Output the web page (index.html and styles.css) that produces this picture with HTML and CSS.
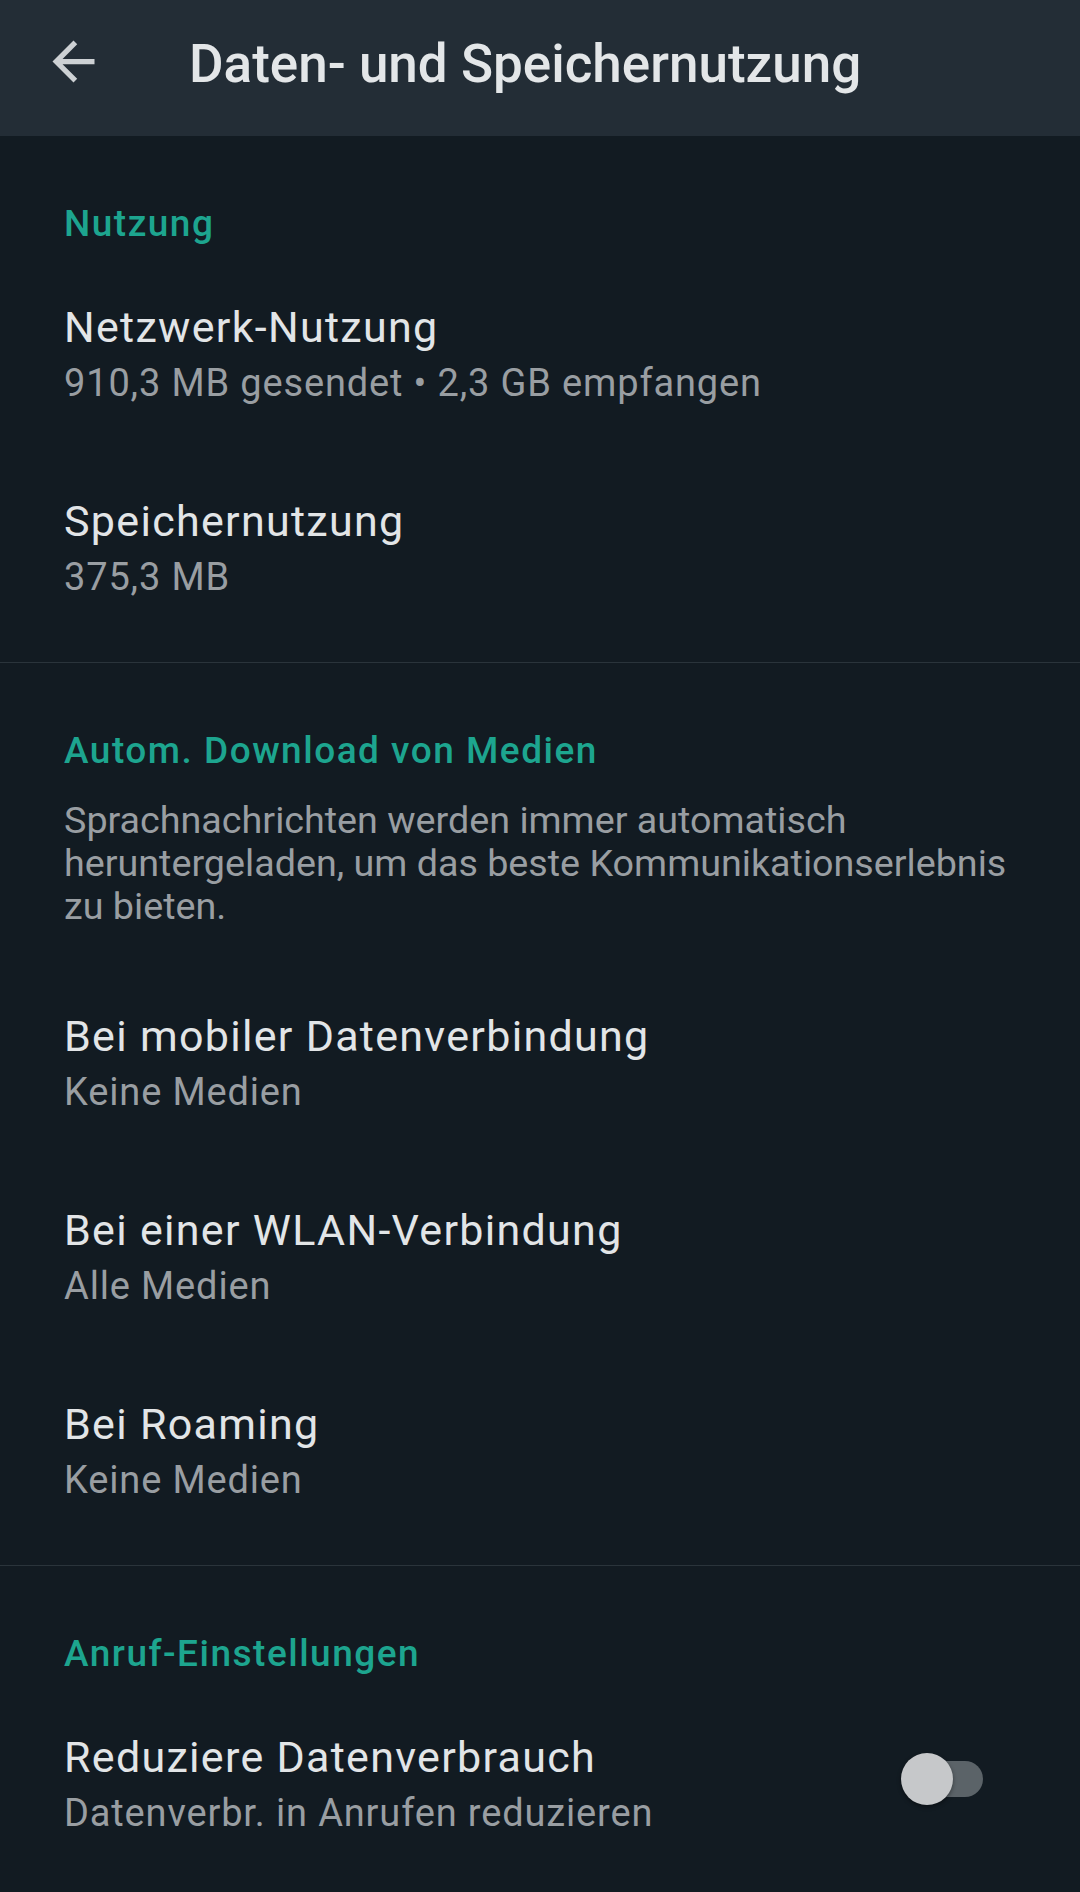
FILE: index.html
```html
<!DOCTYPE html>
<html lang="de">
<head>
    <meta charset="UTF-8">
    <meta name="viewport" content="width=device-width, initial-scale=1.0">
    <title>Daten- und Speichernutzung</title>
    <link rel="stylesheet" href="styles.css">
</head>
<body>
    <!-- Top bar -->
    <header class="toolbar">
        <svg class="back" viewBox="0 0 24 24" aria-hidden="true">
            <path d="M20 11H7.83l5.59-5.59L12 4l-8 8 8 8 1.41-1.41L7.83 13H20v-2z"/>
        </svg>
        <h1>Daten- und Speichernutzung</h1>
    </header>

    <!-- Usage -->
    <section class="group">
        <h2>Nutzung</h2>
        <div class="item">
            <div class="text">
                <div class="title">Netzwerk-Nutzung</div>
                <div class="sub">910,3 MB gesendet • 2,3 GB empfangen</div>
            </div>
        </div>
        <div class="item">
            <div class="text">
                <div class="title">Speichernutzung</div>
                <div class="sub">375,3 MB</div>
            </div>
        </div>
    </section>

    <!-- Auto download -->
    <section class="group">
        <h2>Autom. Download von Medien</h2>
        <p class="note">Sprachnachrichten werden immer automatisch heruntergeladen, um das beste Kommunikationserlebnis zu bieten.</p>
        <div class="item">
            <div class="text">
                <div class="title">Bei mobiler Datenverbindung</div>
                <div class="sub">Keine Medien</div>
            </div>
        </div>
        <div class="item">
            <div class="text">
                <div class="title">Bei einer WLAN-Verbindung</div>
                <div class="sub">Alle Medien</div>
            </div>
        </div>
        <div class="item">
            <div class="text">
                <div class="title">Bei Roaming</div>
                <div class="sub">Keine Medien</div>
            </div>
        </div>
    </section>

    <!-- Calls -->
    <section class="group last">
        <h2>Anruf-Einstellungen</h2>
        <div class="item">
            <div class="text">
                <div class="title">Reduziere Datenverbrauch</div>
                <div class="sub">Datenverbr. in Anrufen reduzieren</div>
            </div>
            <div class="switch">
                <span class="track"></span>
                <span class="thumb"></span>
            </div>
        </div>
    </section>
</body>
</html>
```

FILE: styles.css
```css
/* Dark settings screen */
body {
    margin: 0;
    padding: 0;
    background-color: #121b22;
    font-family: Roboto, "Noto Sans", sans-serif;
    color: #e2e5e7;
    min-height: 100vh;
}
.toolbar {
    height: 136px;
    background-color: #232d36;
    display: flex;
    align-items: flex-start;
    padding: 30px 0 0 42px;
    box-sizing: border-box;
}
.back {
    width: 63px;
    height: 63px;
    fill: #cdd1d4;
    flex-shrink: 0;
}
.toolbar h1 {
    margin: 3px 0 0 84px;
    font-size: 53px;
    line-height: 63px;
    font-weight: 500;
    color: #e3e6e8;
}
.group {
    padding: 64px 0 15px 64px;
    border-bottom: 1px solid #2a343b;
}
.group.last {
    border-bottom: none;
}
h2 {
    margin: 0 0 11px;
    font-size: 37px;
    line-height: 48px;
    font-weight: 500;
    letter-spacing: 1.5px;
    color: #1da58f;
}
.note {
    margin: 24px 64px 40px 0;
    font-size: 37.7px;
    line-height: 43px;
    color: #999ea2;
}
.item {
    display: flex;
    align-items: center;
    padding: 40px 97px 41px 0;
}
.text {
    flex: 1;
}
.title {
    font-size: 43px;
    line-height: 56px;
    letter-spacing: 1.3px;
}
.sub {
    font-size: 38px;
    line-height: 57px;
    letter-spacing: 0.85px;
    color: #999ea2;
}
.switch {
    position: relative;
    width: 82px;
    height: 52px;
    margin-bottom: 14px;
}
.track {
    position: absolute;
    left: 10px;
    right: 0;
    top: 8px;
    height: 36px;
    border-radius: 18px;
    background-color: #5b6368;
}
.thumb {
    position: absolute;
    left: 0;
    top: 0;
    width: 52px;
    height: 52px;
    border-radius: 50%;
    background-color: #c6c8ca;
    box-shadow: 0 2px 4px rgba(0, 0, 0, 0.4);
}
```
